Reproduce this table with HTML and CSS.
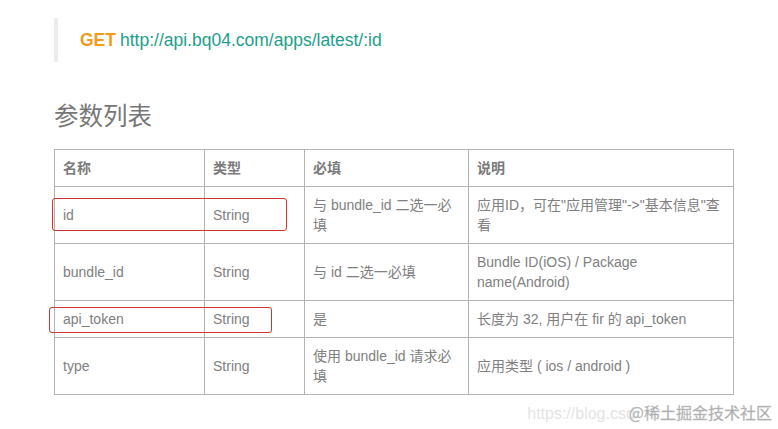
FILE: index.html
```html
<!DOCTYPE html>
<html lang="zh-CN">
<head>
<meta charset="utf-8">
<title>参数列表</title>
<link rel="stylesheet" href="styles.css">
</head>
<body>
<div class="page">
  <blockquote class="endpoint"><span class="method">GET</span> <span class="url">http://api.bq04.com/apps/latest/:id</span></blockquote>
  <h2 class="title">参数列表</h2>
  <div class="table-wrap">
    <table class="params">
      <colgroup>
        <col class="c1"><col class="c2"><col class="c3"><col class="c4">
      </colgroup>
      <thead>
        <tr><th>名称</th><th>类型</th><th>必填</th><th>说明</th></tr>
      </thead>
      <tbody>
        <tr><td>id</td><td>String</td><td>与 bundle_id 二选一必填</td><td>应用ID，可在"应用管理"-&gt;"基本信息"查看</td></tr>
        <tr><td>bundle_id</td><td>String</td><td>与 id 二选一必填</td><td>Bundle ID(iOS) / Package name(Android)</td></tr>
        <tr><td>api_token</td><td>String</td><td>是</td><td>长度为 32, 用户在 fir 的 api_token</td></tr>
        <tr><td>type</td><td>String</td><td>使用 bundle_id 请求必填</td><td>应用类型 ( ios / android )</td></tr>
      </tbody>
    </table>
    <div class="mark mark-1"></div>
    <div class="mark mark-2"></div>
  </div>
  <div class="watermark"><span class="wm-url">https://blog.csd</span><span class="wm-brand">@稀土掘金技术社区</span></div>
</div>
</body>
</html>
```
FILE: styles.css
```css
html, body {
  margin: 0;
  padding: 0;
  background: #fff;
}
body {
  font-family: "Liberation Sans", "Noto Sans CJK SC", sans-serif;
  color: #777;
}
.page {
  position: relative;
  width: 778px;
  height: 429px;
  overflow: hidden;
  padding: 18px 0 0 54px;
  box-sizing: border-box;
}
.endpoint {
  margin: 0;
  height: 44px;
  border-left: 4px solid #ececec;
  padding-left: 22px;
  display: flex;
  align-items: center;
  font-size: 17.5px;
  box-sizing: border-box;
}
.method {
  color: #f39a1c;
  font-weight: bold;
  margin-right: 4px;
}
.url {
  color: #1e9e8c;
}
.title {
  margin: 39px 0 0 0;
  font-size: 24.5px;
  line-height: 32px;
  font-weight: normal;
  color: #777;
  height: 32px;
}
.table-wrap {
  position: relative;
  margin-top: 16px;
  width: 679px;
}
.params {
  border-collapse: collapse;
  width: 679px;
  table-layout: fixed;
  font-size: 14px;
  line-height: 20px;
}
.c1 { width: 150px; }
.c2 { width: 100px; }
.c3 { width: 164px; }
.c4 { width: 265px; }
.params th, .params td {
  border: 1px solid #b3b3b3;
  padding: 8px 8px;
  text-align: left;
  vertical-align: middle;
  color: #808080;
}
.params th {
  font-weight: bold;
  color: #7a7a7a;
}
.mark {
  position: absolute;
  border: 1.5px solid #d0342c;
  border-radius: 3px;
  box-sizing: border-box;
}
.mark-1 {
  left: -2px;
  top: 49px;
  width: 235px;
  height: 33px;
}
.mark-2 {
  left: -5px;
  top: 158px;
  width: 223px;
  height: 26px;
}
.watermark {
  position: absolute;
  right: 6px;
  bottom: 5px;
  display: flex;
  align-items: baseline;
}
.wm-url {
  color: #e4e4e4;
  font-size: 16px;
  margin-right: -6px;
}
.wm-brand {
  position: relative;
  color: #a8a8a8;
  font-family: "Noto Sans CJK SC", sans-serif;
  font-size: 16px;
  -webkit-text-stroke: 0.3px #c8c8c8;
}
```
